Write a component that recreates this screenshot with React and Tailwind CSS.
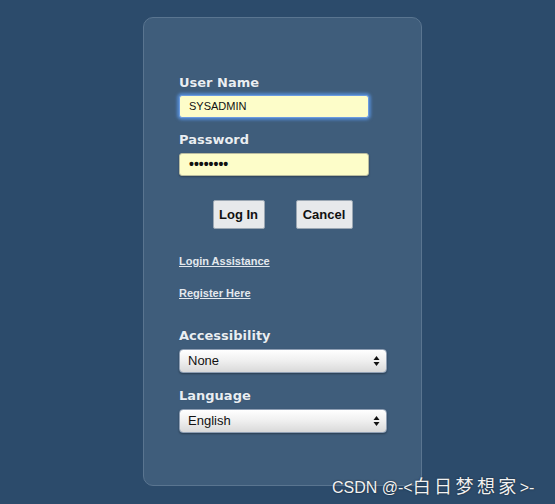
import React from "react";

const labelCls =
  "ml-[35px] h-[16px] leading-[16px] text-[13px] font-bold text-[#e9eef3] [font-family:'DejaVu_Sans',Verdana,sans-serif] [text-shadow:0_0_1px_rgba(0,0,0,0.25)]";

function Arrows() {
  return (
    <svg width="7" height="12" viewBox="0 0 7 12" className="shrink-0">
      <path d="M3.5 1 L6.5 5 L0.5 5 Z" fill="#111" />
      <path d="M0.5 7 L6.5 7 L3.5 11 Z" fill="#111" />
    </svg>
  );
}

function Select({ value }) {
  return (
    <div className="ml-[35px] w-[208px] h-[24px] box-border flex items-center justify-between pl-[8px] pr-[6px] rounded-[4px] border border-[#8f9fb4] bg-[linear-gradient(#ffffff,#f1f1f1_45%,#d9d9d9)] shadow-[0_1px_2px_rgba(0,0,0,0.35)] text-[13px] text-[#111] [font-family:'Liberation_Sans',Arial,sans-serif]">
      <span>{value}</span>
      <Arrows />
    </div>
  );
}

export default function App() {
  return (
    <div className="relative w-[555px] h-[504px] bg-[#2c4b6b] overflow-hidden">
      <div className="absolute left-[143px] top-[17px] w-[279px] h-[469px] box-border rounded-[10px] border border-[#5a7590] bg-[#3f5d7b] pt-[57px] flex flex-col">
        <div className={labelCls}>User Name</div>
        <div className="ml-[35px] mt-[4px] w-[190px] h-[23px] box-border flex items-center pl-[9px] rounded-[3px] border border-[#6b9be0] bg-[#fdfdc9] shadow-[0_0_3px_2px_rgba(90,150,230,0.75)] text-[11px] text-[#111] [font-family:'Liberation_Sans',Arial,sans-serif]">
          SYSADMIN
        </div>
        <div className={labelCls + " mt-[14px]"}>Password</div>
        <div className="ml-[35px] mt-[5px] w-[190px] h-[23px] box-border flex items-center pl-[9px] rounded-[3px] border border-[#b9bca0] bg-[#fdfdc9] shadow-[0_1px_2px_rgba(0,0,0,0.3)] text-[14px] font-bold text-[#111] [font-family:'Liberation_Sans',Arial,sans-serif]">
          ••••••••
        </div>
        <div className="mt-[24px] flex justify-center gap-[31px]">
          <div className="w-[52px] h-[29px] box-border flex items-center justify-center rounded-[2px] border border-[#9ba7b3] bg-[#e7e9eb] text-[13px] font-bold text-[#111] [font-family:'Liberation_Sans',Arial,sans-serif]">
            Log In
          </div>
          <div className="w-[57px] h-[29px] box-border flex items-center justify-center rounded-[2px] border border-[#9ba7b3] bg-[#e7e9eb] text-[13px] font-bold text-[#111] [font-family:'Liberation_Sans',Arial,sans-serif]">
            Cancel
          </div>
        </div>
        <div className="ml-[35px] mt-[25px] h-[14px] leading-[14px] text-[11px] font-bold underline text-[#e3e8ed] [font-family:'Liberation_Sans',Arial,sans-serif]">
          Login Assistance
        </div>
        <div className="ml-[35px] mt-[18px] h-[14px] leading-[14px] text-[11px] font-bold underline text-[#e3e8ed] [font-family:'Liberation_Sans',Arial,sans-serif]">
          Register Here
        </div>
        <div className={labelCls + " mt-[28px]"}>Accessibility</div>
        <div className="mt-[5px]">
          <Select value="None" />
        </div>
        <div className={labelCls + " mt-[15px]"}>Language</div>
        <div className="mt-[5px]">
          <Select value="English" />
        </div>
      </div>
      <div className="absolute left-[332px] top-[472px] h-[26px] flex items-baseline text-[#f2f2f2] [text-shadow:0_0_2px_rgba(0,0,0,0.6)] whitespace-nowrap [font-family:'Liberation_Sans','Noto_Sans_CJK_SC',sans-serif]">
        <span className="text-[16px]">CSDN @-&lt;</span>
        <span className="text-[18px] tracking-[3.4px] [font-family:'Noto_Sans_CJK_SC',sans-serif]">白日梦想家</span>
        <span className="text-[16px]">&gt;-</span>
      </div>
    </div>
  );
}
